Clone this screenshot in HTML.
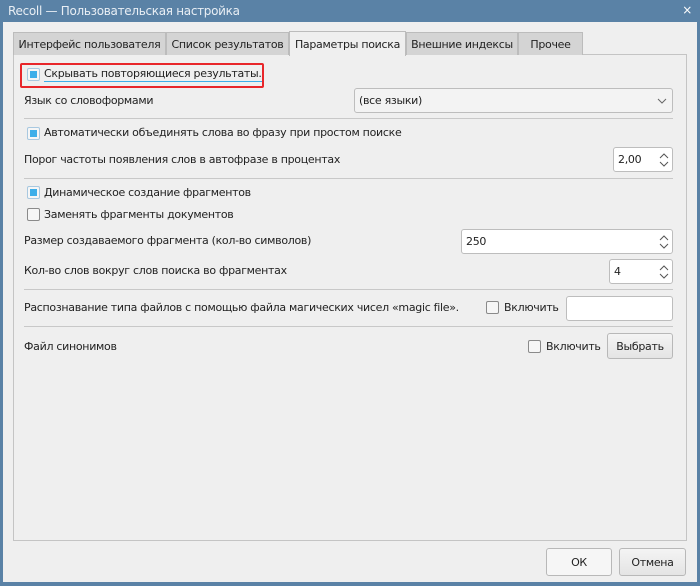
<!DOCTYPE html>
<html><head><meta charset="utf-8"><style>
*{box-sizing:border-box;margin:0;padding:0}
body{width:700px;height:586px;background:#5a82a6;font-family:"DejaVu Sans","Liberation Sans",sans-serif;font-size:11px;letter-spacing:-0.3px;color:#222;position:relative;overflow:hidden}
.a{position:absolute;white-space:nowrap}
.win{position:absolute;left:3px;top:22px;width:694px;height:560px;background:#efefef}
.title{left:8px;top:4px;color:#e8eef4;font-size:12px}
.tab{position:absolute;top:32px;height:23px;background:#d4d4d4;border:1px solid #bcbcbc;border-bottom:none;padding:5px 0 0 0;text-align:center;white-space:nowrap}
.tab.act{background:#efefef;top:31px;height:25px;padding-top:6px}
.panel{position:absolute;left:13px;top:54px;width:674px;height:487px;border:1px solid #c4c4c4;background:#efefef}
.cb{position:absolute;width:13px;height:13px;border:1px solid #8a8a8a;border-radius:2px;background:#f6f6f6}
.cb.on{border-color:#a8c8e0}
.cb.on::after{content:"";position:absolute;left:2px;top:2px;width:7px;height:7px;background:#3daee9}
.box{position:absolute;background:#fff;border:1px solid #bdbdbd;border-radius:3px}
.sep{position:absolute;left:24px;width:649px;height:1px;background:#c8c8c8}
.btn{position:absolute;border:1px solid #b8b8b8;border-radius:3px;background:linear-gradient(#f4f4f4,#e4e4e4);text-align:center}
.sp{position:absolute;right:3px;top:4px}
</style></head><body>
<div class="a title">Recoll — Пользовательская настройка</div>
<div class="a" style="right:8px;top:3px;color:#fff;font-size:12px">×</div>
<div class="win"></div>
<div class="panel"></div>
<div class="tab" style="left:13px;width:153px">Интерфейс пользователя</div>
<div class="tab" style="left:166px;width:123px">Список результатов</div>
<div class="tab act" style="left:289px;width:117px">Параметры поиска</div>
<div class="tab" style="left:406px;width:112px">Внешние индексы</div>
<div class="tab" style="left:518px;width:65px">Прочее</div>

<div class="a" style="left:20px;top:63px;width:244px;height:25px;border:2px solid #e8262a;border-radius:2px"></div>
<div class="cb on" style="left:27px;top:68px"></div>
<div class="a" style="left:44px;top:67px;border-bottom:1px solid #3daee9;line-height:14px">Скрывать повторяющиеся результаты.</div>

<div class="a" style="left:24px;top:94px">Язык со словоформами</div>
<div class="box" style="left:354px;top:88px;width:319px;height:25px;background:#f3f3f3"><span class="a" style="left:4px;top:5px">(все языки)</span>
<svg class="a" style="right:5px;top:8px" width="10" height="8"><path d="M1 2 L5 6 L9 2" stroke="#666" fill="none"/></svg></div>
<div class="sep" style="top:118px"></div>

<div class="cb on" style="left:27px;top:127px"></div>
<div class="a" style="left:44px;top:126px">Автоматически объединять слова во фразу при простом поиске</div>
<div class="a" style="left:24px;top:153px">Порог частоты появления слов в автофразе в процентах</div>
<div class="box" style="left:613px;top:147px;width:60px;height:25px"><span class="a" style="left:4px;top:5px">2,00</span><svg class="sp" width="10" height="16"><path d="M1 6 L5 2 L9 6 M1 10 L5 14 L9 10" stroke="#555" fill="none"/></svg></div>
<div class="sep" style="top:178px"></div>

<div class="cb on" style="left:27px;top:186px"></div>
<div class="a" style="left:44px;top:186px">Динамическое создание фрагментов</div>
<div class="cb" style="left:27px;top:208px"></div>
<div class="a" style="left:44px;top:208px">Заменять фрагменты документов</div>
<div class="a" style="left:24px;top:234px">Размер создаваемого фрагмента (кол-во символов)</div>
<div class="box" style="left:461px;top:229px;width:212px;height:25px"><span class="a" style="left:4px;top:5px">250</span><svg class="sp" width="10" height="16"><path d="M1 6 L5 2 L9 6 M1 10 L5 14 L9 10" stroke="#555" fill="none"/></svg></div>
<div class="a" style="left:24px;top:264px">Кол-во слов вокруг слов поиска во фрагментах</div>
<div class="box" style="left:609px;top:259px;width:64px;height:25px"><span class="a" style="left:4px;top:5px">4</span><svg class="sp" width="10" height="16"><path d="M1 6 L5 2 L9 6 M1 10 L5 14 L9 10" stroke="#555" fill="none"/></svg></div>
<div class="sep" style="top:289px"></div>

<div class="a" style="left:24px;top:301px">Распознавание типа файлов с помощью файла магических чисел «magic file».</div>
<div class="cb" style="left:486px;top:301px"></div>
<div class="a" style="left:504px;top:301px">Включить</div>
<div class="box" style="left:566px;top:296px;width:107px;height:25px"></div>
<div class="sep" style="top:326px"></div>

<div class="a" style="left:24px;top:340px">Файл синонимов</div>
<div class="cb" style="left:528px;top:340px"></div>
<div class="a" style="left:546px;top:340px">Включить</div>
<div class="btn" style="left:607px;top:333px;width:66px;height:26px;padding-top:6px">Выбрать</div>

<div class="btn" style="left:546px;top:548px;width:66px;height:28px;padding-top:7px;background:#f6f6f6">ОК</div>
<div class="btn" style="left:619px;top:548px;width:67px;height:28px;padding-top:7px">Отмена</div>
</body></html>
